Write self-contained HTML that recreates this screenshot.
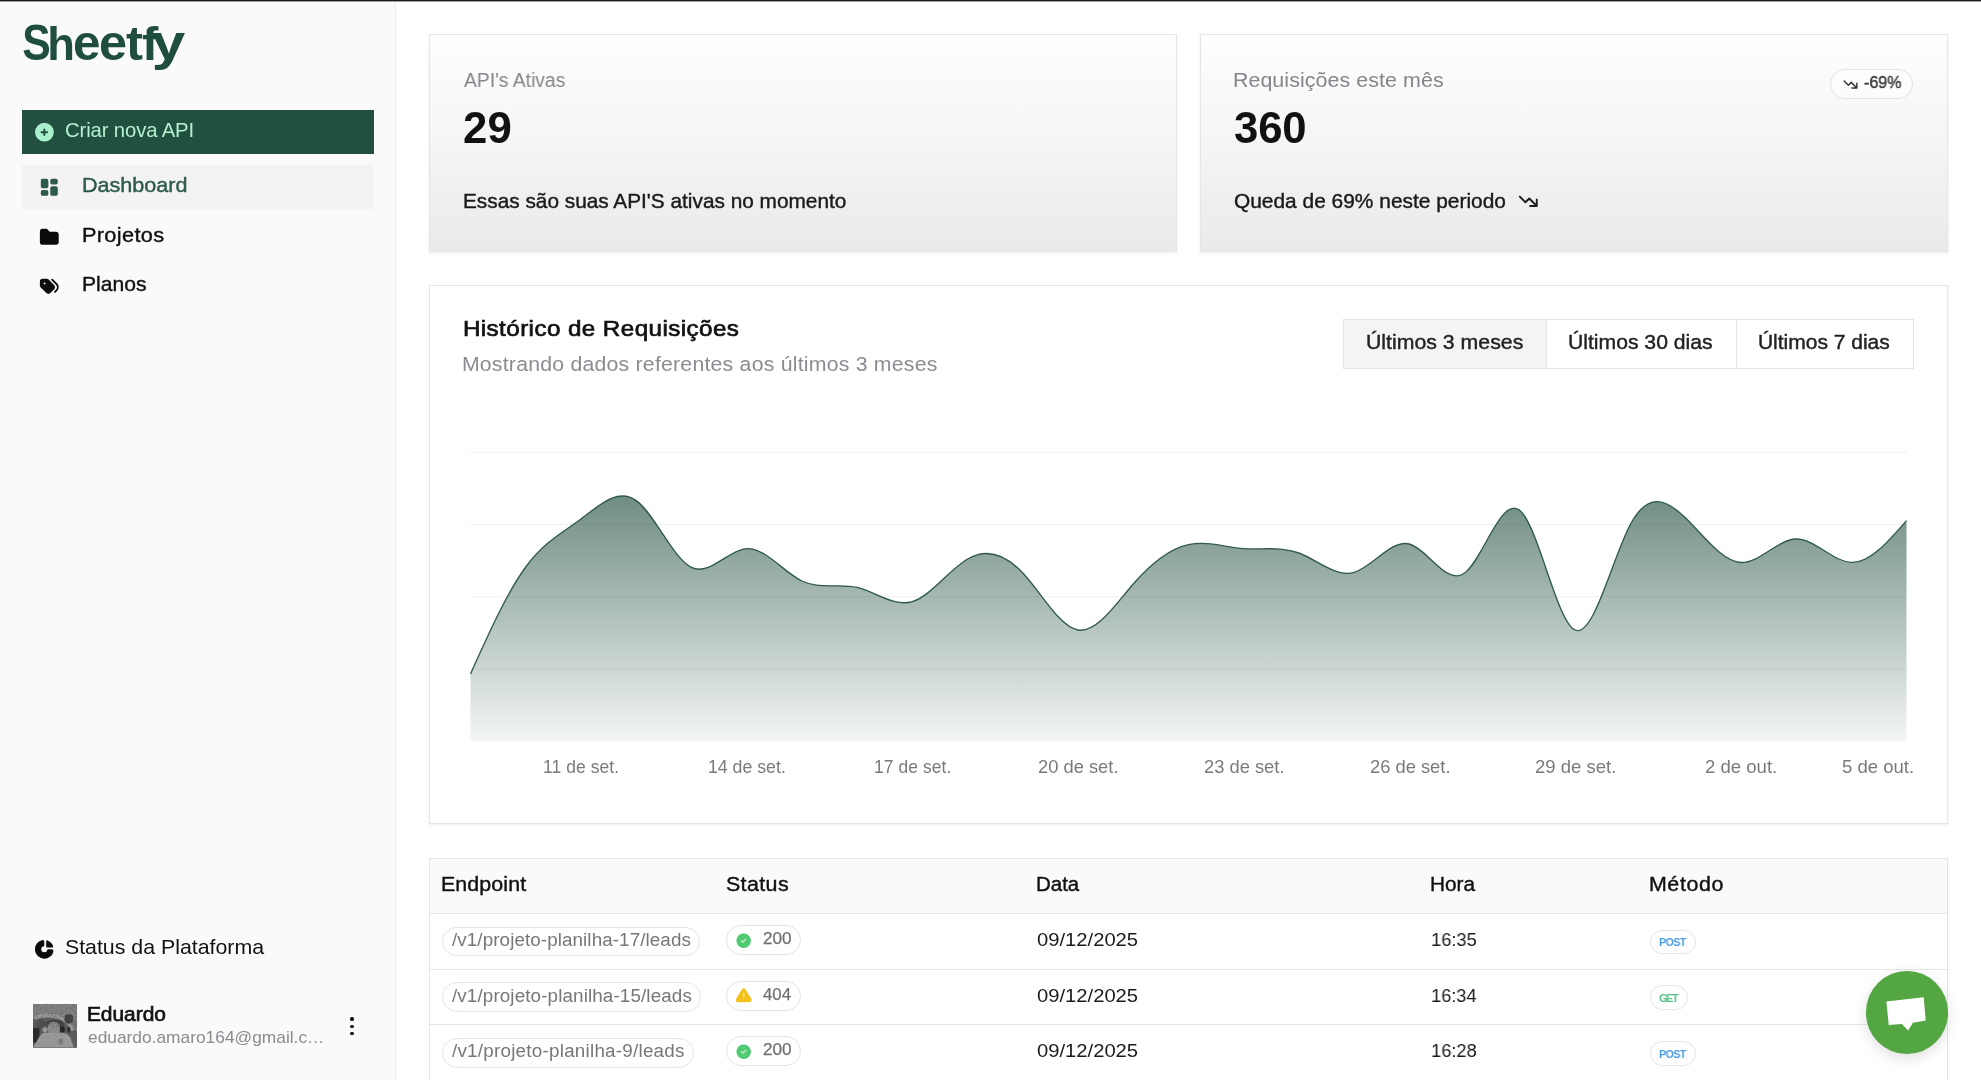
<!DOCTYPE html>
<html lang="pt-BR"><head><meta charset="utf-8"><title>Sheetfy - Dashboard</title>
<style>
*{box-sizing:border-box;margin:0;padding:0}
html,body{width:1981px;height:1080px;overflow:hidden;background:#fff;font-family:"Liberation Sans",sans-serif}
.t{position:absolute;line-height:1;white-space:pre;will-change:transform}
.abs{position:absolute}
#side{position:absolute;left:0;top:0;width:396px;height:1080px;background:#fafafa;border-right:1px solid #ececec}
#topbar{position:absolute;left:0;top:0;width:1981px;height:2px;background:linear-gradient(#1b1b1b 0,#1b1b1b 50%,#8f8f8f 50%,#b5b5b5 100%);z-index:50}
.card{position:absolute;border:1px solid #e6e6e6;box-shadow:0 1px 3px rgba(0,0,0,.07)}
.stat{background:linear-gradient(180deg,#fefefe 0%,#f4f5f5 50%,#e8ebea 100%)}
.pill{position:absolute;border:1px solid #e4e4e4;border-radius:99px;background:#fff}
.hl{position:absolute;height:1px;background:#e6e6e6}
</style></head><body>
<div id="topbar"></div>
<aside id="side">
<div class="abs" aria-label="Sheetfy" style="left:0;top:16px;height:54px;width:200px;font-size:49.13px;font-weight:700;color:#1f4d3f;line-height:54px;white-space:nowrap"><span style="position:absolute;top:0;left:21.9px;transform:scale(0.8685,1);transform-origin:1.73px 44px">S</span><span style="position:absolute;top:0;left:47.44px;transform:scale(0.9233,0.95);transform-origin:3.45px 44px">h</span><span style="position:absolute;top:0;left:73.1px;transform:scale(1.0054,1);transform-origin:2.0px 44px">e</span><span style="position:absolute;top:0;left:98.9px;transform:scale(1.0266,1);transform-origin:2.0px 44px">e</span><span style="position:absolute;top:0;left:125.7px;transform:scale(1.0366,0.97);transform-origin:0.6px 44px">t</span><span style="position:absolute;top:0;left:142.2px;transform:scale(0.997,0.95);transform-origin:1.0px 44px">f</span><span style="position:absolute;top:0;left:151.9px;transform:scale(1.2255,1);transform-origin:0.6px 44px">y</span></div>
<div class="abs" style="left:22px;top:110px;width:352.4px;height:44px;background:#215041"></div>
<svg class="abs" style="left:33px;top:120.7px" width="22.6" height="22.6" viewBox="0 0 24 24"><path fill="#a9efcb" d="M4.929 4.929a10 10 0 1 1 14.141 14.141a10 10 0 0 1 -14.14 -14.14zm8.071 4.071a1 1 0 1 0 -2 0v2h-2a1 1 0 1 0 0 2h2v2a1 1 0 1 0 2 0v-2h2a1 1 0 1 0 0 -2h-2v-2z"/></svg>
<span class="t" style="left:65.22px;top:119px;line-height:22px;font-size:20.29px;color:#b5f0d0;letter-spacing:-0.124px;">Criar nova API</span>
<div class="abs" style="left:22px;top:165px;width:352.4px;height:44px;background:#f3f3f4"></div>
<svg class="abs" style="left:38.4px;top:176.4px" width="22.6" height="22.6" viewBox="0 0 24 24"><path fill="#2d5a4a" d="M9 3a2 2 0 0 1 2 2v6a2 2 0 0 1 -2 2h-4a2 2 0 0 1 -2 -2v-6a2 2 0 0 1 2 -2zm0 12a2 2 0 0 1 2 2v2a2 2 0 0 1 -2 2h-4a2 2 0 0 1 -2 -2v-2a2 2 0 0 1 2 -2zm10 -4a2 2 0 0 1 2 2v6a2 2 0 0 1 -2 2h-4a2 2 0 0 1 -2 -2v-6a2 2 0 0 1 2 -2zm0 -8a2 2 0 0 1 2 2v2a2 2 0 0 1 -2 2h-4a2 2 0 0 1 -2 -2v-2a2 2 0 0 1 2 -2z"/></svg>
<span class="t" style="left:81.55px;top:174px;line-height:22px;font-size:20.29px;color:#2d5a4a;-webkit-text-stroke:0.4px #2d5a4a;letter-spacing:0.0px;transform:scaleX(1.0635);transform-origin:1.45px 50%;">Dashboard</span>
<svg class="abs" style="left:38.4px;top:225.8px" width="22.6" height="22.6" viewBox="0 0 24 24"><path fill="#0c0c0c" d="M9 3a1 1 0 0 1 .608 .206l.1 .087l2.706 2.707h6.586a3 3 0 0 1 2.995 2.824l.005 .176v8a3 3 0 0 1 -2.824 2.995l-.176 .005h-14a3 3 0 0 1 -2.995 -2.824l-.005 -.176v-11a3 3 0 0 1 2.824 -2.995l.176 -.005h4z"/></svg>
<span class="t" style="left:81.55px;top:224px;line-height:22px;font-size:20.29px;color:#111111;-webkit-text-stroke:0.4px #111111;letter-spacing:0.348px;transform:scaleX(1.07);transform-origin:1.45px 50%;">Projetos</span>
<svg class="abs" style="left:38.1px;top:274.3px" width="22.6" height="22.6" viewBox="0 0 24 24"><path fill="#0c0c0c" d="M9.172 5a3 3 0 0 1 2.121 .879l5.71 5.71a3.41 3.41 0 0 1 0 4.822l-3.592 3.592a3.41 3.41 0 0 1 -4.822 0l-5.71 -5.71a3 3 0 0 1 -.879 -2.121v-4.172a3 3 0 0 1 3 -3zm-2.172 4h-.01a1 1 0 1 0 .01 2a1 1 0 0 0 0 -2"/><path fill="#0c0c0c" d="M14.293 5.293a1 1 0 0 1 1.414 0l4.593 4.592a5.82 5.82 0 0 1 0 8.23l-1.592 1.592a1 1 0 0 1 -1.414 -1.414l1.592 -1.592a3.82 3.82 0 0 0 0 -5.402l-4.592 -4.592a1 1 0 0 1 0 -1.414"/></svg>
<span class="t" style="left:81.55px;top:273px;line-height:22px;font-size:20.29px;color:#111111;-webkit-text-stroke:0.4px #111111;letter-spacing:0.0px;transform:scaleX(1.0402);transform-origin:1.45px 50%;">Planos</span>
<svg class="abs" style="left:33px;top:937.7px" width="22.6" height="22.6" viewBox="0 0 24 24"><path fill="#0c0c0c" d="M9.883 2.207a1.900 1.900 0 0 1 2.087 1.522l.025 .167l.005 .104v7a1 1 0 0 0 .883 .993l.117 .007h6.800a2 2 0 0 1 2 2a1 1 0 0 1 -.026 .226a10 10 0 1 1 -12.270 -11.933l.270 -.067l.110 -.020z"/><circle cx="12" cy="12" r="3.200" fill="#fafafa"/><path fill="#fafafa" d="M12 8.500h3.500v3.500h-3.500z"/><path fill="#0c0c0c" d="M14 3.500v5.500a1 1 0 0 0 1 1h5.500a1 1 0 0 0 .943 -1.332a10 10 0 0 0 -6.110 -6.111a1 1 0 0 0 -1.333 .943z"/></svg>
<span class="t" style="left:65.02px;top:936px;line-height:22px;font-size:20.29px;color:#111111;letter-spacing:0.0px;transform:scaleX(1.0514);transform-origin:1.38px 50%;">Status da Plataforma</span>
<div class="abs" style="left:33.200px;top:1004.300px;width:43.800px;height:43.500px;overflow:hidden;background:#777"><svg width="43.800" height="43.500" viewBox="0 0 44 44" preserveAspectRatio="none"><defs><filter id="nz" x="0" y="0" width="100%" height="100%"><feTurbulence type="fractalNoise" baseFrequency=".55" numOctaves="2" seed="7"/><feColorMatrix type="matrix" values="0 0 0 0 .12  0 0 0 0 .12  0 0 0 0 .12  2.4 0 0 0 -.95"/></filter><filter id="bl"><feGaussianBlur stdDeviation=".7"/></filter></defs><rect width="44" height="44" fill="#787878"/><g filter="url(#bl)"><rect width="44" height="16" fill="#858585"/><path d="M0 16q8-3 18-2t20 8l6 6v16H0z" fill="#5a5a5a"/><path d="M2 14q10-4 22-1t16 14" fill="none" stroke="#9c9c9c" stroke-width="3.500"/><ellipse cx="22" cy="20.500" rx="9.500" ry="4.500" fill="#3b3b3b"/><ellipse cx="36" cy="15" rx="4.500" ry="5" fill="#3a3a3a"/><ellipse cx="8" cy="20" rx="5" ry="4" fill="#4a4a4a"/><rect x="0" y="24" width="6.500" height="15" fill="#2c2c2c"/><ellipse cx="21" cy="25" rx="6.500" ry="7" fill="#8b8b8b"/><ellipse cx="29.500" cy="25.500" rx="2.600" ry="3.600" fill="#262626"/><ellipse cx="36" cy="26" rx="1.600" ry="3" fill="#2e2e2e"/><ellipse cx="12" cy="26" rx="2.500" ry="2.500" fill="#9a9a9a"/><path d="M0 44l7-12q3-4 8-3h14q5 0 8 4l7 11z" fill="#9a9a9a"/><path d="M36 30q5 4 8 12v2h-3z" fill="#5e5e5e"/><ellipse cx="28" cy="38" rx="2.300" ry="3.200" fill="#7c7c7c"/></g><rect width="44" height="23" filter="url(#nz)" opacity=".8"/><rect y="23" width="44" height="21" filter="url(#nz)" opacity=".18"/></svg></div>
<span class="t" style="left:87.31px;top:1003px;line-height:22px;font-size:19.71px;color:#111111;-webkit-text-stroke:0.7px #111111;letter-spacing:0.0px;transform:scaleX(1.062);transform-origin:1.29px 50%;">Eduardo</span>
<span class="t" style="left:87.87px;top:1028px;line-height:19px;font-size:17px;color:#8a8a90;letter-spacing:0.0px;transform:scaleX(1.0202);transform-origin:0.73px 50%;">eduardo.amaro164@gmail.c…</span>
<div class="abs" style="left:350.300px;top:1017.3px;width:3.400px;height:3.400px;border-radius:50%;background:#111"></div>
<div class="abs" style="left:350.300px;top:1024.7px;width:3.400px;height:3.400px;border-radius:50%;background:#111"></div>
<div class="abs" style="left:350.300px;top:1032.1px;width:3.400px;height:3.400px;border-radius:50%;background:#111"></div>
</aside>
<main>
<section>
<div class="card stat" style="left:429px;top:34px;width:748.300px;height:218px"></div>
<div class="card stat" style="left:1200px;top:34px;width:748px;height:218px"></div>
<span class="t" style="left:463.68px;top:69px;line-height:22px;font-size:20.0px;color:#85858b;letter-spacing:0.0px;transform:scaleX(0.9652);transform-origin:0.32px 50%;">API&#x27;s Ativas</span>
<span class="t" style="left:462.86px;top:103px;line-height:49px;font-size:43.71px;color:#111111;font-weight:700;letter-spacing:0.251px;">29</span>
<span class="t" style="left:462.55px;top:190px;line-height:22px;font-size:20.29px;color:#1a1a1a;-webkit-text-stroke:0.4px #1a1a1a;letter-spacing:-0.0px;transform:scaleX(1.026);transform-origin:1.45px 50%;">Essas são suas API&#x27;S ativas no momento</span>
<span class="t" style="left:1232.74px;top:69px;line-height:22px;font-size:20.0px;color:#85858b;letter-spacing:0.07px;transform:scaleX(1.07);transform-origin:1.66px 50%;">Requisições este mês</span>
<span class="t" style="left:1233.81px;top:103px;line-height:49px;font-size:43.71px;color:#111111;font-weight:700;letter-spacing:-0.169px;">360</span>
<span class="t" style="left:1233.65px;top:190px;line-height:22px;font-size:20.29px;color:#1a1a1a;-webkit-text-stroke:0.4px #1a1a1a;letter-spacing:0.0px;transform:scaleX(1.0307);transform-origin:0.75px 50%;">Queda de 69% neste periodo</span>
<svg class="abs" style="left:1517.100px;top:190px" width="22.6" height="22.6" viewBox="0 0 24 24"><path d="M3 7l6 6l4 -4l8 8M21 10v7h-7" fill="none" stroke="#1a1a1a" stroke-width="2" stroke-linecap="round" stroke-linejoin="round"/></svg>
<div class="pill" style="left:1829.800px;top:69px;width:83.200px;height:29.500px;background:rgba(255,255,255,.55);border-color:#e0e1e1"></div>
<svg class="abs" style="left:1841.800px;top:75.750px" width="17" height="17" viewBox="0 0 24 24"><path d="M3 7l6 6l4 -4l8 8M21 10v7h-7" fill="none" stroke="#333" stroke-width="2" stroke-linecap="round" stroke-linejoin="round"/></svg>
<span class="t" style="left:1863.97px;top:73px;line-height:18px;font-size:16.4px;color:#333333;-webkit-text-stroke:0.4px #333333;letter-spacing:0.0px;transform:scaleX(0.9786);transform-origin:0.53px 50%;">-69%</span>
</section>
<section>
<div class="card" style="left:429px;top:285px;width:1519px;height:539px;background:#fff"></div>
<span class="t" style="left:462.51px;top:316px;line-height:25px;font-size:22.61px;color:#111111;-webkit-text-stroke:0.7px #111111;letter-spacing:0.397px;transform:scaleX(1.07);transform-origin:1.49px 50%;">Histórico de Requisições</span>
<span class="t" style="left:462.34px;top:353px;line-height:22px;font-size:19.86px;color:#8b8b92;letter-spacing:0.209px;transform:scaleX(1.07);transform-origin:1.66px 50%;">Mostrando dados referentes aos últimos 3 meses</span>
<div class="abs" style="left:1343px;top:319px;width:570.500px;height:49.500px;border:1px solid #e4e4e4;background:#fff"></div>
<div class="abs" style="left:1344px;top:320px;width:202px;height:47.500px;background:#f4f4f4"></div>
<div class="abs" style="left:1546px;top:319px;width:1px;height:49.500px;background:#e4e4e4"></div>
<div class="abs" style="left:1736px;top:319px;width:1px;height:49.500px;background:#e4e4e4"></div>
<span class="t" style="left:1366.24px;top:331px;line-height:22px;font-size:19.86px;color:#222222;-webkit-text-stroke:0.4px #222222;letter-spacing:0.021px;transform:scaleX(1.07);transform-origin:1.36px 50%;">Últimos 3 meses</span>
<span class="t" style="left:1568.24px;top:331px;line-height:22px;font-size:19.86px;color:#222222;-webkit-text-stroke:0.4px #222222;letter-spacing:0.0px;transform:scaleX(1.0661);transform-origin:1.36px 50%;">Últimos 30 dias</span>
<span class="t" style="left:1758.04px;top:331px;line-height:22px;font-size:19.86px;color:#222222;-webkit-text-stroke:0.4px #222222;letter-spacing:0.0px;transform:scaleX(1.0574);transform-origin:1.36px 50%;">Últimos 7 dias</span>
<svg class="abs" style="left:0;top:0" width="1981" height="1080" viewBox="0 0 1981 1080"><defs><linearGradient id="ga" x1="0" y1="495" x2="0" y2="741.600" gradientUnits="userSpaceOnUse"><stop offset="0" stop-color="#1f4d3f" stop-opacity=".645"/><stop offset="1" stop-color="#1f4d3f" stop-opacity=".05"/></linearGradient></defs><line x1="470.500" y1="452.4" x2="1906.500" y2="452.4" stroke="#f1f1f1" stroke-width="1.100"/><line x1="470.500" y1="524.5" x2="1906.500" y2="524.5" stroke="#f1f1f1" stroke-width="1.100"/><line x1="470.500" y1="596.8" x2="1906.500" y2="596.8" stroke="#f1f1f1" stroke-width="1.100"/><line x1="470.500" y1="668.8" x2="1906.500" y2="668.8" stroke="#f1f1f1" stroke-width="1.100"/><path d="M470.50,674.00C488.91,633.05,507.32,592.10,525.73,567.00C544.14,541.90,562.55,532.64,580.96,519.00C599.37,505.36,617.78,487.33,636.19,500.60C654.60,513.87,673.01,558.45,691.42,567.40C709.83,576.35,728.24,549.66,746.65,548.60C765.07,547.54,783.48,572.11,801.89,581.00C820.30,589.89,838.71,583.10,857.12,587.40C875.53,591.70,893.94,607.11,912.35,601.60C930.76,596.09,949.17,569.68,967.58,559.00C985.99,548.32,1004.40,553.36,1022.81,573.00C1041.22,592.64,1059.63,626.87,1078.04,630.00C1096.45,633.13,1114.86,605.16,1133.27,584.00C1151.68,562.84,1170.09,548.50,1188.50,544.60C1206.91,540.70,1225.32,547.25,1243.73,548.60C1262.14,549.95,1280.55,546.09,1298.97,553.00C1317.38,559.91,1335.79,577.58,1354.20,572.40C1372.61,567.22,1391.02,539.19,1409.43,544.00C1427.84,548.81,1446.25,586.47,1464.66,573.00C1483.07,559.53,1501.48,494.94,1519.89,510.50C1538.30,526.06,1556.71,621.75,1575.12,630.00C1593.53,638.25,1611.94,559.04,1630.35,524.50C1648.76,489.96,1667.17,500.09,1685.58,518.00C1703.99,535.91,1722.40,561.61,1740.81,562.50C1759.22,563.39,1777.63,539.46,1796.04,539.00C1814.45,538.54,1832.86,561.55,1851.28,562.40C1869.69,563.25,1888.10,541.92,1906.51,520.60L1906.51,741.6L470.50,741.6Z" fill="url(#ga)"/><path d="M470.50,674.00C488.91,633.05,507.32,592.10,525.73,567.00C544.14,541.90,562.55,532.64,580.96,519.00C599.37,505.36,617.78,487.33,636.19,500.60C654.60,513.87,673.01,558.45,691.42,567.40C709.83,576.35,728.24,549.66,746.65,548.60C765.07,547.54,783.48,572.11,801.89,581.00C820.30,589.89,838.71,583.10,857.12,587.40C875.53,591.70,893.94,607.11,912.35,601.60C930.76,596.09,949.17,569.68,967.58,559.00C985.99,548.32,1004.40,553.36,1022.81,573.00C1041.22,592.64,1059.63,626.87,1078.04,630.00C1096.45,633.13,1114.86,605.16,1133.27,584.00C1151.68,562.84,1170.09,548.50,1188.50,544.60C1206.91,540.70,1225.32,547.25,1243.73,548.60C1262.14,549.95,1280.55,546.09,1298.97,553.00C1317.38,559.91,1335.79,577.58,1354.20,572.40C1372.61,567.22,1391.02,539.19,1409.43,544.00C1427.84,548.81,1446.25,586.47,1464.66,573.00C1483.07,559.53,1501.48,494.94,1519.89,510.50C1538.30,526.06,1556.71,621.75,1575.12,630.00C1593.53,638.25,1611.94,559.04,1630.35,524.50C1648.76,489.96,1667.17,500.09,1685.58,518.00C1703.99,535.91,1722.40,561.61,1740.81,562.50C1759.22,563.39,1777.63,539.46,1796.04,539.00C1814.45,538.54,1832.86,561.55,1851.28,562.40C1869.69,563.25,1888.10,541.92,1906.51,520.60" fill="none" stroke="#2f594c" stroke-width="1.350"/></svg>
<span class="t" style="left:543.02px;top:757px;line-height:20px;font-size:17.43px;color:#7a7a7a;letter-spacing:0.089px;">11 de set.</span>
<span class="t" style="left:708.22px;top:757px;line-height:20px;font-size:17.43px;color:#7a7a7a;letter-spacing:0.0px;transform:scaleX(1.0171);transform-origin:1.38px 50%;">14 de set.</span>
<span class="t" style="left:873.82px;top:757px;line-height:20px;font-size:17.43px;color:#7a7a7a;letter-spacing:0.095px;">17 de set.</span>
<span class="t" style="left:1038.17px;top:757px;line-height:20px;font-size:17.43px;color:#7a7a7a;letter-spacing:0.0px;transform:scaleX(1.0526);transform-origin:0.83px 50%;">20 de set.</span>
<span class="t" style="left:1203.87px;top:757px;line-height:20px;font-size:17.43px;color:#7a7a7a;letter-spacing:0.0px;transform:scaleX(1.0526);transform-origin:0.83px 50%;">23 de set.</span>
<span class="t" style="left:1369.57px;top:757px;line-height:20px;font-size:17.43px;color:#7a7a7a;letter-spacing:0.0px;transform:scaleX(1.0526);transform-origin:0.83px 50%;">26 de set.</span>
<span class="t" style="left:1534.97px;top:757px;line-height:20px;font-size:17.43px;color:#7a7a7a;letter-spacing:0.0px;transform:scaleX(1.0647);transform-origin:0.83px 50%;">29 de set.</span>
<span class="t" style="left:1704.87px;top:757px;line-height:20px;font-size:17.43px;color:#7a7a7a;letter-spacing:0.0px;transform:scaleX(1.0666);transform-origin:0.83px 50%;">2 de out.</span>
<span class="t" style="left:1842.17px;top:757px;line-height:20px;font-size:17.43px;color:#7a7a7a;letter-spacing:0.0px;transform:scaleX(1.0636);transform-origin:0.83px 50%;">5 de out.</span>
</section>
<section>
<div class="abs" style="left:429px;top:857.500px;width:1519px;height:240px;border:1px solid #e4e4e4;background:#fff"></div>
<div class="abs" style="left:430px;top:858.500px;width:1517px;height:54.500px;background:#fafafa"></div>
<div class="hl" style="left:430px;top:913px;width:1517px"></div>
<div class="hl" style="left:430px;top:968.8px;width:1517px"></div>
<div class="hl" style="left:430px;top:1024.4px;width:1517px"></div>
<span class="t" style="left:440.55px;top:873px;line-height:22px;font-size:20.0px;color:#111111;-webkit-text-stroke:0.4px #111111;letter-spacing:0.097px;transform:scaleX(1.07);transform-origin:1.45px 50%;">Endpoint</span>
<span class="t" style="left:725.82px;top:873px;line-height:22px;font-size:20.0px;color:#111111;-webkit-text-stroke:0.4px #111111;letter-spacing:0.368px;transform:scaleX(1.07);transform-origin:0.78px 50%;">Status</span>
<span class="t" style="left:1036.15px;top:873px;line-height:22px;font-size:20.0px;color:#111111;-webkit-text-stroke:0.4px #111111;letter-spacing:0.0px;transform:scaleX(1.0251);transform-origin:1.45px 50%;">Data</span>
<span class="t" style="left:1430.15px;top:873px;line-height:22px;font-size:20.0px;color:#111111;-webkit-text-stroke:0.4px #111111;letter-spacing:0.0px;transform:scaleX(1.0385);transform-origin:1.45px 50%;">Hora</span>
<span class="t" style="left:1649.15px;top:873px;line-height:22px;font-size:20.0px;color:#111111;-webkit-text-stroke:0.4px #111111;letter-spacing:0.586px;transform:scaleX(1.07);transform-origin:1.45px 50%;">Método</span>
<div class="pill" style="left:442px;top:926.6px;width:258.0px;height:29.800px"></div>
<div class="pill" style="left:725.600px;top:925.0px;width:75.400px;height:30px"></div>
<svg class="abs" style="left:734.8px;top:931.5px" width="17.4" height="17.4" viewBox="0 0 24 24"><path fill="#4fcb74" d="M17 3.340a10 10 0 1 1 -14.995 8.984l-.005 -.324l.005 -.324a10 10 0 0 1 14.995 -8.336zm-1.293 5.953a1 1 0 0 0 -1.320 -.083l-.094 .083l-3.293 3.292l-1.293 -1.292l-.094 -.083a1 1 0 0 0 -1.403 1.403l.083 .094l2 2l.094 .083a1 1 0 0 0 1.226 0l.094 -.083l4 -4l.083 -.094a1 1 0 0 0 -.083 -1.320z"/><circle cx="12" cy="12" r="9" fill="#4fcb74" opacity=".4"/></svg>
<div class="pill" style="left:1649.600px;top:929.6px;width:46px;height:24.800px"></div>
<span class="t" style="left:451.76px;top:930px;line-height:20px;font-size:17.6px;color:#777777;letter-spacing:0.079px;transform:scaleX(1.07);transform-origin:0.24px 50%;">/v1/projeto-planilha-17/leads</span>
<span class="t" style="left:762.71px;top:929px;line-height:19px;font-size:16.57px;color:#707070;-webkit-text-stroke:0.25px #707070;letter-spacing:0.0px;transform:scaleX(1.0371);transform-origin:0.69px 50%;">200</span>
<span class="t" style="left:1036.85px;top:929px;line-height:21px;font-size:19.14px;color:#1a1a1a;letter-spacing:0.0px;transform:scaleX(1.0567);transform-origin:0.75px 50%;">09/12/2025</span>
<span class="t" style="left:1430.50px;top:929px;line-height:21px;font-size:19.14px;color:#1a1a1a;letter-spacing:0.0px;transform:scaleX(0.9543);transform-origin:1.50px 50%;">16:35</span>
<span class="t" style="left:1658.64px;top:936px;line-height:12px;font-size:11.59px;color:#4d9fe0;font-weight:700;letter-spacing:-0.722px;transform:scaleX(0.93);transform-origin:0.76px 50%;">POST</span>
<div class="pill" style="left:442px;top:982.3px;width:259.0px;height:29.800px"></div>
<div class="pill" style="left:725.600px;top:980.7px;width:75.400px;height:30px"></div>
<svg class="abs" style="left:734.7px;top:987.2px" width="17.4" height="17.4" viewBox="0 0 24 24"><path fill="#f4c21e" d="M12 1.670c.955 0 1.845 .467 2.390 1.247l.105 .160l8.114 13.548a2.914 2.914 0 0 1 -2.307 4.363l-.195 .008h-16.225a2.914 2.914 0 0 1 -2.582 -4.200l.099 -.185l8.110 -13.538a2.914 2.914 0 0 1 2.491 -1.403zm.010 13.330l-.127 .007a1 1 0 0 0 0 1.986l.117 .007l.127 -.007a1 1 0 0 0 0 -1.986l-.117 -.007zm-.010 -7a1 1 0 0 0 -.993 .883l-.007 .117v4l.007 .117a1 1 0 0 0 1.986 0l.007 -.117v-4l-.007 -.117a1 1 0 0 0 -.993 -.883z"/><path d="M12 4L21 19.500H3z" fill="#f4c21e" opacity=".45"/></svg>
<div class="pill" style="left:1649.600px;top:985.3px;width:38.4px;height:24.800px"></div>
<span class="t" style="left:451.76px;top:986px;line-height:20px;font-size:17.6px;color:#777777;letter-spacing:0.112px;transform:scaleX(1.07);transform-origin:0.24px 50%;">/v1/projeto-planilha-15/leads</span>
<span class="t" style="left:763.08px;top:985px;line-height:19px;font-size:16.57px;color:#707070;-webkit-text-stroke:0.25px #707070;letter-spacing:0.0px;transform:scaleX(1.0162);transform-origin:0.32px 50%;">404</span>
<span class="t" style="left:1036.85px;top:985px;line-height:21px;font-size:19.14px;color:#1a1a1a;letter-spacing:0.0px;transform:scaleX(1.0567);transform-origin:0.75px 50%;">09/12/2025</span>
<span class="t" style="left:1430.50px;top:985px;line-height:21px;font-size:19.14px;color:#1a1a1a;letter-spacing:0.0px;transform:scaleX(0.9494);transform-origin:1.50px 50%;">16:34</span>
<span class="t" style="left:1658.87px;top:992px;line-height:12px;font-size:11.59px;color:#56c287;font-weight:700;letter-spacing:-1.395px;transform:scaleX(0.93);transform-origin:0.53px 50%;">GET</span>
<div class="pill" style="left:442px;top:1038.0px;width:251.6px;height:29.800px"></div>
<div class="pill" style="left:725.600px;top:1036.4px;width:75.400px;height:30px"></div>
<svg class="abs" style="left:734.8px;top:1042.9px" width="17.4" height="17.4" viewBox="0 0 24 24"><path fill="#4fcb74" d="M17 3.340a10 10 0 1 1 -14.995 8.984l-.005 -.324l.005 -.324a10 10 0 0 1 14.995 -8.336zm-1.293 5.953a1 1 0 0 0 -1.320 -.083l-.094 .083l-3.293 3.292l-1.293 -1.292l-.094 -.083a1 1 0 0 0 -1.403 1.403l.083 .094l2 2l.094 .083a1 1 0 0 0 1.226 0l.094 -.083l4 -4l.083 -.094a1 1 0 0 0 -.083 -1.320z"/><circle cx="12" cy="12" r="9" fill="#4fcb74" opacity=".4"/></svg>
<div class="pill" style="left:1649.600px;top:1041.0px;width:46px;height:24.800px"></div>
<span class="t" style="left:451.76px;top:1041px;line-height:20px;font-size:17.6px;color:#777777;letter-spacing:0.222px;transform:scaleX(1.07);transform-origin:0.24px 50%;">/v1/projeto-planilha-9/leads</span>
<span class="t" style="left:762.71px;top:1040px;line-height:19px;font-size:16.57px;color:#707070;-webkit-text-stroke:0.25px #707070;letter-spacing:0.0px;transform:scaleX(1.0371);transform-origin:0.69px 50%;">200</span>
<span class="t" style="left:1036.85px;top:1040px;line-height:21px;font-size:19.14px;color:#1a1a1a;letter-spacing:0.0px;transform:scaleX(1.0567);transform-origin:0.75px 50%;">09/12/2025</span>
<span class="t" style="left:1430.50px;top:1040px;line-height:21px;font-size:19.14px;color:#1a1a1a;letter-spacing:0.0px;transform:scaleX(0.9543);transform-origin:1.50px 50%;">16:28</span>
<span class="t" style="left:1658.64px;top:1048px;line-height:12px;font-size:11.59px;color:#4d9fe0;font-weight:700;letter-spacing:-0.722px;transform:scaleX(0.93);transform-origin:0.76px 50%;">POST</span>
</section>
</main>
<div class="abs" style="left:1865.600px;top:971.300px;width:82.500px;height:82.500px;border-radius:50%;background:#53a642;box-shadow:0 4px 14px rgba(0,0,0,.13);z-index:40"></div>
<svg class="abs" style="left:0;top:0;z-index:41" width="1981" height="1080" viewBox="0 0 1981 1080"><path d="M1886.400 1001.600L1923.700 997.200L1925.700 1020.500L1912.900 1022.800L1908.200 1030.400L1901.800 1024L1888.700 1025Z" fill="#fff"/></svg>
</body></html>
